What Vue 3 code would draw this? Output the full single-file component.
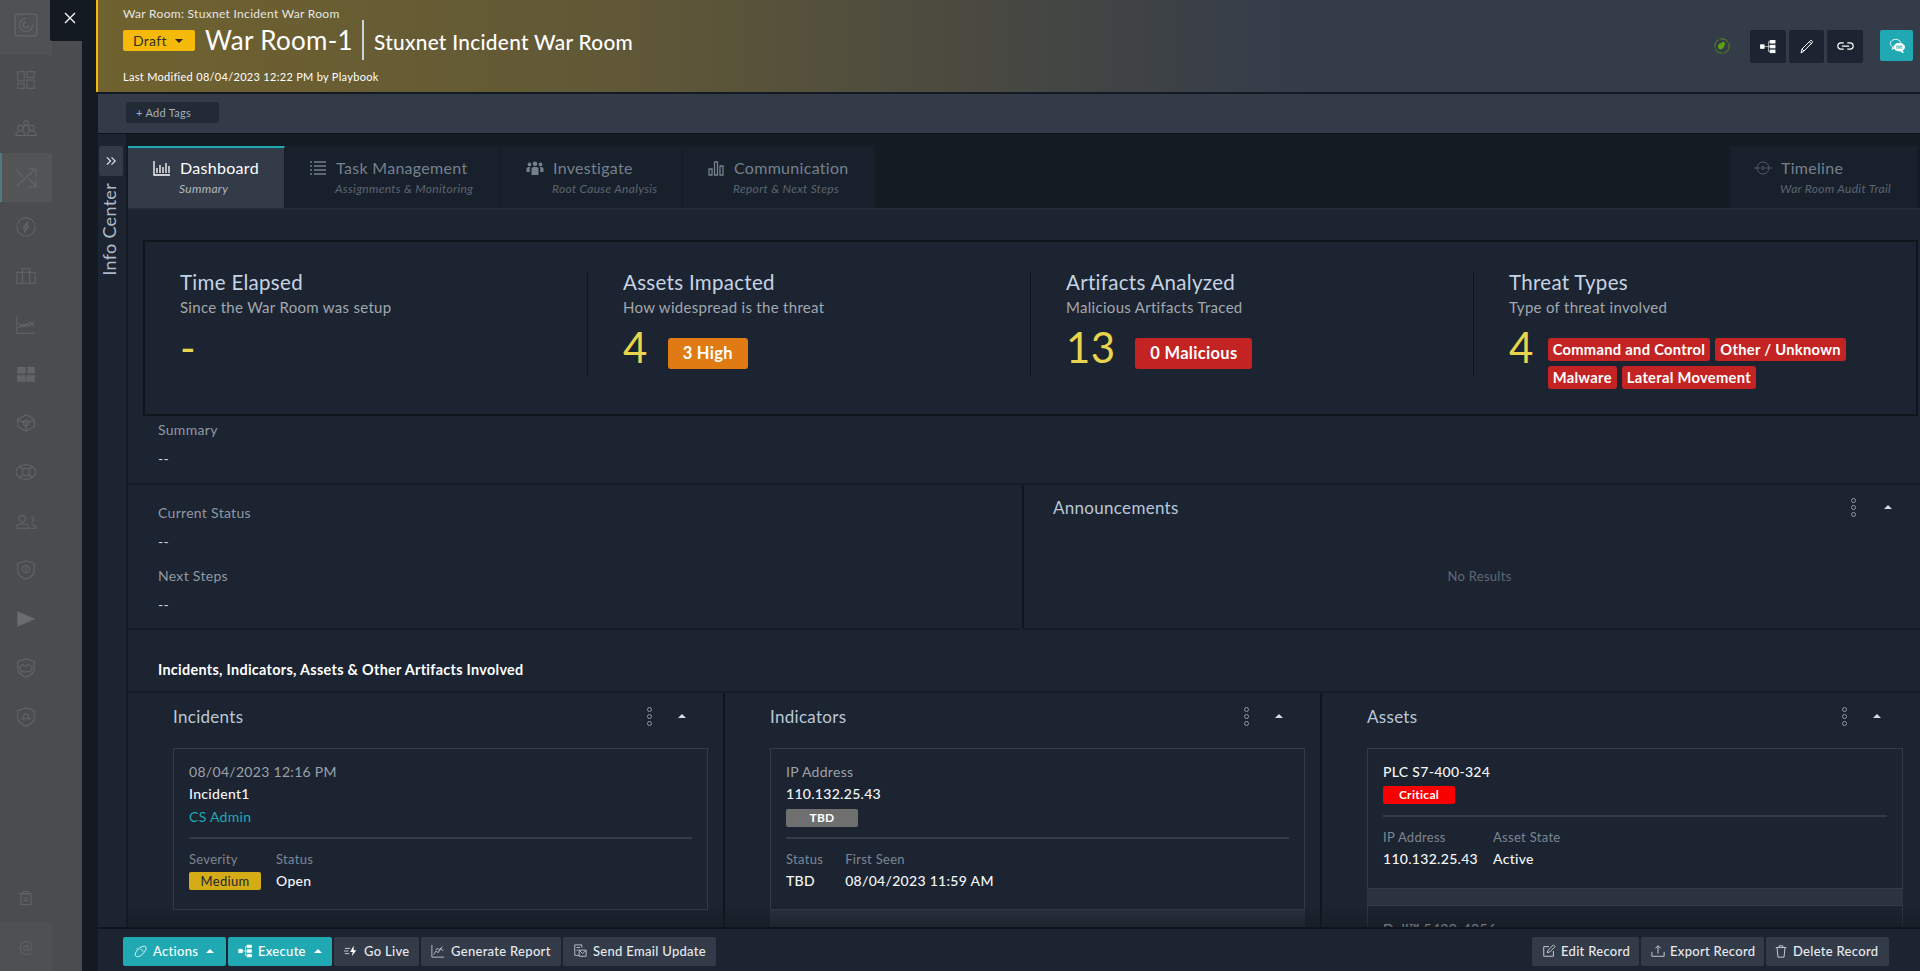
<template>
  <div class="page">
    <aside class="sidebar">
      <div v-for="(item, i) in navIcons" :key="i" class="nav-item" :class="item.cls">
        <svg viewBox="0 0 24 24" :width="item.size || 22" :height="item.size || 22" fill="none" stroke="#656669" stroke-width="1.1">
          <path :d="item.d" />
        </svg>
      </div>
      <div class="nav-spacer"></div>
      <div class="nav-item bottom">
        <svg viewBox="0 0 24 24" width="20" height="20" fill="none" stroke="#656669" stroke-width="1.2">
          <path d="M6 7h12v13H6zM4 7h16M9 7V4h6v3M9 12h5l-1-1M15 15h-5l1 1" />
        </svg>
      </div>
      <div class="nav-item bottom last">
        <span class="at">@</span>
      </div>
    </aside>

    <button class="close-btn">
      <svg viewBox="0 0 12 12" width="12" height="12" stroke="#fff" stroke-width="1.3"><path d="M1 1l10 10M11 1L1 11" /></svg>
    </button>

    <div class="main">
      <header class="head">
        <div class="head-left">
          <div class="crumb">War Room: Stuxnet Incident War Room</div>
          <div class="title-row">
            <span class="draft">Draft <i class="caret-down"></i></span>
            <span class="room-id">War Room-1</span>
            <span class="room-name">Stuxnet Incident War Room</span>
          </div>
          <div class="modified">Last Modified 08/04/2023 12:22 PM by Playbook</div>
        </div>
        <div class="head-actions">
          <svg class="status-icon" viewBox="0 0 16 16" width="16" height="16">
            <circle cx="8" cy="8" r="7.2" fill="none" stroke="#5aa30a" stroke-width="0.8" stroke-dasharray="9 1.5" />
            <path d="M4 8.400c0-2 1.600-3.400 3.400-3.400L9 3.600l.8.8 1-.4.5 1-.8.8.7.9-1 .6c0 2.300-1.500 4-3.500 4-1.600 0-2.700-1.200-2.700-2.900z" fill="#5aa30a" />
          </svg>
          <button class="icon-btn wide">
            <svg viewBox="0 0 18 16" width="18" height="14" fill="#fff" stroke="#fff" stroke-width="1">
              <rect x="0.500" y="5.500" width="4" height="4" />
              <rect x="11.500" y="0.500" width="5.500" height="3" />
              <rect x="11.500" y="6" width="5.500" height="3" />
              <rect x="11.500" y="11.500" width="5.500" height="3" />
              <path d="M4 7.500h7.500M11.500 2h-2v11h2" fill="none" stroke-width="0.700" />
            </svg>
          </button>
          <button class="icon-btn">
            <svg viewBox="0 0 16 16" width="16" height="16" fill="none" stroke="#fff" stroke-width="1">
              <path d="M2 14l1-4L11.500 1.500c.6-.6 2.400 1 1.900 1.800L5 12zM3 10l2 2M10.300 2.700l2.400 2.200" />
            </svg>
          </button>
          <button class="icon-btn wide">
            <svg viewBox="0 0 18 10" width="17" height="9" fill="none" stroke="#fff" stroke-width="1.300">
              <path d="M7 1H4a3.500 3.500 0 000 7h3M11 1h3a3.500 3.500 0 010 7h-3M5 4.500h8" />
            </svg>
          </button>
          <button class="chat-btn">
            <svg viewBox="0 0 18 18" width="16" height="16" fill="none" stroke="#fff" stroke-width="1">
              <path d="M8 11c-.5 0-1.200 0-1.800-.2L3.500 13l.6-3C2.500 9 1.500 7.500 1.500 6c0-2.600 2.900-4.500 5.800-4.500S13 3 13.300 5.400" />
              <path d="M5.500 10.500c0-2.800 2.500-4.500 6-4.500s6 1.800 6 4.300c0 1.500-1 2.900-2.500 3.600l1 2.800-3.300-2.200c-4 .3-7.200-1.500-7.200-4z" fill="#fff" />
              <path d="M8 9.200h7M8 11.200h7" stroke="#20a9b3" />
            </svg>
          </button>
        </div>
      </header>

      <div class="tagbar">
        <span class="add-tags">+ Add Tags</span>
      </div>

      <div class="body">
        <div class="rail">
          <button class="rail-toggle">
            <svg viewBox="0 0 12 10" width="11" height="10" fill="none" stroke="#dfe4ea" stroke-width="1.300"><path d="M1 1l4 4-4 4M6 1l4 4-4 4" /></svg>
          </button>
          <span class="rail-label">Info Center</span>
        </div>

        <div class="content">
          <nav class="tabs">
            <div v-for="tab in tabs" :key="tab.name" class="tab" :class="[tab.cls, { active: tab.active }]">
              <div class="tab-top">
                <svg class="tab-icon" viewBox="0 0 18 16" width="18" height="16" :fill="tab.solid ? 'currentColor' : 'none'" :stroke="tab.solid ? 'none' : 'currentColor'" :stroke-width="tab.thin ? 0.8 : 1.3">
                  <path :d="tab.icon" />
                </svg>
                <span>{{ tab.name }}</span>
              </div>
              <div class="tab-sub">{{ tab.sub }}</div>
            </div>
          </nav>

          <div class="scroll">
            <section class="kpis">
              <div class="kpi">
                <div class="kpi-inner">
                  <h3>Time Elapsed</h3>
                  <p>Since the War Room was setup</p>
                  <div class="kpi-val"><span class="num">-</span></div>
                </div>
              </div>
              <div class="kpi">
                <div class="kpi-inner">
                  <h3>Assets Impacted</h3>
                  <p>How widespread is the threat</p>
                  <div class="kpi-val"><span class="num">4</span><span class="big-badge orange">3 High</span></div>
                </div>
              </div>
              <div class="kpi">
                <div class="kpi-inner">
                  <h3>Artifacts Analyzed</h3>
                  <p>Malicious Artifacts Traced</p>
                  <div class="kpi-val"><span class="num">13</span><span class="big-badge red">0 Malicious</span></div>
                </div>
              </div>
              <div class="kpi">
                <div class="kpi-inner">
                  <h3>Threat Types</h3>
                  <p>Type of threat involved</p>
                  <div class="kpi-val threat">
                    <span class="num">4</span>
                    <div class="threat-tags">
                      <span v-for="t in threats" :key="t" class="threat-tag">{{ t }}</span>
                    </div>
                  </div>
                </div>
              </div>
            </section>

            <section class="summary">
              <div class="lbl">Summary</div>
              <div class="dash">--</div>
            </section>

            <section class="status-row">
              <div class="status-col">
                <div class="lbl">Current Status</div>
                <div class="dash">--</div>
                <div class="lbl next">Next Steps</div>
                <div class="dash">--</div>
              </div>
              <div class="announce">
                <div class="panel-head">
                  <h4>Announcements</h4>
                  <span class="kebab"><i></i><i></i><i></i></span>
                  <i class="caret-up"></i>
                </div>
                <div class="no-results">No Results</div>
              </div>
            </section>

            <h5 class="section-title">Incidents, Indicators, Assets &amp; Other Artifacts Involved</h5>

            <section class="columns">
              <div class="col">
                <div class="panel-head">
                  <h4>Incidents</h4>
                  <span class="kebab"><i></i><i></i><i></i></span>
                  <i class="caret-up"></i>
                </div>
                <div class="card-list plain">
                  <div class="card">
                    <div class="line muted-l">08/04/2023 12:16 PM</div>
                    <div class="line strong">Incident1</div>
                    <div class="line link">CS Admin</div>
                    <hr />
                    <div class="fields">
                      <div>
                        <div class="line field-l">Severity</div>
                        <span class="pill medium">Medium</span>
                      </div>
                      <div>
                        <div class="line field-l">Status</div>
                        <div class="line strong">Open</div>
                      </div>
                    </div>
                  </div>
                </div>
              </div>

              <div class="col">
                <div class="panel-head">
                  <h4>Indicators</h4>
                  <span class="kebab"><i></i><i></i><i></i></span>
                  <i class="caret-up"></i>
                </div>
                <div class="card-list">
                  <div class="card">
                    <div class="line muted-l">IP Address</div>
                    <div class="line strong">110.132.25.43</div>
                    <span class="pill tbd">TBD</span>
                    <hr class="tight" />
                    <div class="fields wide-gap">
                      <div>
                        <div class="line field-l">Status</div>
                        <div class="line strong">TBD</div>
                      </div>
                      <div>
                        <div class="line field-l">First Seen</div>
                        <div class="line strong">08/04/2023 11:59 AM</div>
                      </div>
                    </div>
                  </div>
                </div>
              </div>

              <div class="col">
                <div class="panel-head">
                  <h4>Assets</h4>
                  <span class="kebab"><i></i><i></i><i></i></span>
                  <i class="caret-up"></i>
                </div>
                <div class="card-list">
                  <div class="card short">
                    <div class="line strong">PLC S7-400-324</div>
                    <span class="pill critical">Critical</span>
                    <hr class="tight crit" />
                    <div class="fields">
                      <div>
                        <div class="line field-l">IP Address</div>
                        <div class="line strong">110.132.25.43</div>
                      </div>
                      <div>
                        <div class="line field-l">Asset State</div>
                        <div class="line strong">Active</div>
                      </div>
                    </div>
                  </div>
                  <div class="card">
                    <div class="line strong">Dell™ 5420-4256</div>
                  </div>
                </div>
              </div>
            </section>
          </div>
        </div>
      </div>

      <footer class="foot">
        <div class="foot-group">
          <button class="btn teal w-actions">
            <svg viewBox="0 0 16 16" width="15" height="15" fill="none" stroke="#e8f6f7" stroke-width="1"><path d="M3 13c-1.500-1.500 0-5 2.500-7.500S12 1.500 13.500 3 13 8 10.500 10.500 4.500 14.500 3 13zM8 5l3 3M4 4.500l1 1" /></svg>
            Actions <i class="caret-up white"></i>
          </button>
          <button class="btn teal w-exec">
            <svg viewBox="0 0 18 16" width="15" height="14" fill="#fff" stroke="#fff" stroke-width="1"><rect x="1" y="6" width="4" height="4" /><rect x="11" y="1" width="5" height="3" /><rect x="11" y="6.500" width="5" height="3" /><rect x="11" y="12" width="5" height="3" /><path d="M5 8h6M11 2.500H9v11h2" fill="none" stroke-width="0.700" /></svg>
            Execute <i class="caret-up white"></i>
          </button>
          <button class="btn w-live">
            <svg viewBox="0 0 16 16" width="14" height="14" fill="none" stroke="#d8dde3" stroke-width="1"><path d="M1 5h6M0 8h5M1 11h5" /><path d="M11 2L7 9h3l-1 5 5-7h-3z" fill="#fff" stroke="none" /></svg>
            Go Live
          </button>
          <button class="btn w-report">
            <svg viewBox="0 0 16 16" width="14" height="14" fill="none" stroke="#c6ccd4" stroke-width="1"><path d="M1 1v14h14M3 12l3-4 2 2 3-5 3 3M5 7l3-2 2 2 3-4" /></svg>
            Generate Report
          </button>
          <button class="btn w-mail">
            <svg viewBox="0 0 16 16" width="14" height="14" fill="none" stroke="#c6ccd4" stroke-width="1"><path d="M2 1h8v3M2 1v12h5M4 4h4M4 7h2" /><path d="M7 7h8v7H7zM7 7l4 4 4-4" /></svg>
            Send Email Update
          </button>
        </div>
        <div class="foot-group right">
          <button class="btn w-edit">
            <svg viewBox="0 0 16 16" width="14" height="14" fill="none" stroke="#c6ccd4" stroke-width="1.100"><path d="M8 3H2v11h11V8M6 10l1-3 6-6 2 2-6 6z" /></svg>
            Edit Record
          </button>
          <button class="btn w-export">
            <svg viewBox="0 0 16 16" width="14" height="14" fill="none" stroke="#c6ccd4" stroke-width="1.100"><path d="M8 11V2M5 5l3-3 3 3M1 9v5h14V9" /></svg>
            Export Record
          </button>
          <button class="btn w-delete">
            <svg viewBox="0 0 16 16" width="14" height="14" fill="none" stroke="#c6ccd4" stroke-width="1.100"><path d="M2 4h12M6 4V2h4v2M3.500 4l1 11h7l1-11" /></svg>
            Delete Record
          </button>
        </div>
      </footer>
    </div>
  </div>
</template>

<script setup>
const navIcons = [
  { cls: 'logo', size: 26, d: 'M5 2h14a3 3 0 013 3v14a3 3 0 01-3 3H5a3 3 0 01-3-3V5a3 3 0 013-3zM12 6a6 6 0 106 6M12 9.500a2.500 2.500 0 102.500 2.500' },
  { d: 'M3 3h7v10H3zM13 3h8v6h-8zM3 16h7v5H3zM13 12h8v9h-8z' },
  { d: 'M1 19c0-3 2-5 5-5s5 2 5 5zM13 19c0-3 2-5 5-5s5 2 5 5zM6 14a3 3 0 110-6 3 3 0 010 6zM18 14a3 3 0 110-6 3 3 0 010 6zM9 13c0-3 1-5 3-5s3 2 3 5M12 8a2.500 2.500 0 110-5 2.500 2.500 0 010 5z' },
  { cls: 'active', size: 24, d: 'M2 20L20 3M14 3h7v7M2 5l6 6M14 13l7 7M21 14v7h-7' },
  { d: 'M12 2a10 10 0 100 20 10 10 0 000-20zM14 6l-5 7h3l-2 5 5-7h-3z' },
  { d: 'M2 8h20v12H2zM8 8V4h8v4M8 8v12M16 8v12' },
  { d: 'M2 3v18h20M4 15l5-4 3 3 4-5 5 4M4 10l5 4 3-3 4 2 5-5' },
  { cls: 'blocks', d: 'M3 5h8v6H3zM14 5h7v6h-7zM3 14h8v6H3zM13 14h8v6h-8z' },
  { d: 'M12 3l9 5v8l-9 5-9-5V8zM3 9l9 3 9-3M12 12v9M12 9a3 3 0 100 6 3 3 0 000-6z' },
  { d: 'M12 4c6 0 11 4 11 8s-5 8-11 8S1 16 1 12s5-8 11-8zM12 8a4 4 0 100 8 4 4 0 000-8zM5 6l4 3M19 6l-4 3M5 18l4-3M19 18l-4-3' },
  { d: 'M1 20c0-3 3-5 7-5s7 2 7 5zM8 13a3.500 3.500 0 110-7 3.500 3.500 0 010 7zM17 20h6c0-3-2-4-5-4M18 13a2.500 2.500 0 100-5' },
  { d: 'M12 2l9 3v8c0 4-4 7-9 9-5-2-9-5-9-9V5zM12 7a4 4 0 100 8 4 4 0 000-8zM12 8v6' },
  { cls: 'play', d: 'M3 4l18 8-18 8z' },
  { d: 'M12 2l9 3v8c0 4-4 7-9 9-5-2-9-5-9-9V5zM5 11l4-3 3 2 3-2 4 3-2 5H7z' },
  { d: 'M12 2l9 3v8c0 4-4 7-9 9-5-2-9-5-9-9V5zM7 14h10M9 14l1-5h4l1 5' }
]

const tabs = [
  { name: 'Dashboard', sub: 'Summary', active: true, cls: 't-dash', icon: 'M1 1v14h16M4 13V8M7 13V5M10 13V7M13 13V3M16 13V6' },
  { name: 'Task Management', sub: 'Assignments & Monitoring', cls: 't-task', icon: 'M1 2h2M5 2h12M1 6h2M5 6h12M1 10h2M5 10h12M1 14h2M5 14h12' },
  { name: 'Investigate', sub: 'Root Cause Analysis', cls: 't-inv', solid: true, icon: 'M9 1.500a2.300 2.300 0 110 4.600 2.300 2.300 0 010-4.600zM3.500 2.500a1.900 1.900 0 110 3.800 1.900 1.900 0 010-3.800zM14.500 2.500a1.900 1.900 0 110 3.800 1.900 1.900 0 010-3.800zM5.500 15V9c0-1.500 1.500-2.300 3.500-2.300s3.500.8 3.500 2.300v6zM.5 12V8.500c0-1 1.200-1.500 3.800-1.500-.4.500-.6 1.200-.6 2v3zM17.500 12V8.500c0-1-1.200-1.500-3.800-1.500.4.500.6 1.200.6 2v3z' },
  { name: 'Communication', sub: 'Report & Next Steps', cls: 't-comm', icon: 'M2 15V9h3v6zM7.500 15V2h3v13zM13 15V6h3v9z' },
  { name: 'Timeline', sub: 'War Room Audit Trail', cls: 't-time', thin: true, icon: 'M3 8a6 6 0 0112 0A6 6 0 013 8zM0 8h6M12 8h6M7.500 8a1.500 1.500 0 103 0 1.500 1.500 0 00-3 0z' }
]

const threats = ['Command and Control', 'Other / Unknown', 'Malware', 'Lateral Movement']
</script>

<style>
html,
body {
  margin: 0;
  background: #131a22;
}
</style>

<style scoped>
.page {
  position: relative;
  display: flex;
  height: 971px;
  width: 1920px;
  overflow: hidden;
  background: #131a22;
  font-family: Lato, "Open Sans", sans-serif;
  font-size: 14px;
  color: #fff;
  letter-spacing: 0.3px;
}

button {
  font-family: inherit;
  letter-spacing: inherit;
  border: none;
  cursor: pointer;
}

h3, h4, h5, p {
  margin: 0;
  font-weight: 400;
}

/* sidebar, dimmed behind the panel */
.sidebar {
  width: 82px;
  flex: none;
  display: flex;
  flex-direction: column;
  background: #4b4c4f;
}

.nav-item {
  width: 52px;
  height: 49px;
  display: flex;
  align-items: center;
  justify-content: center;
  box-sizing: border-box;
}

.nav-item.logo {
  height: 55px;
  padding-bottom: 6px;
  background: #505153;
}

.nav-item.active {
  background: #535456;
  border-left: 2px solid #4f7a80;
}

.nav-item.play svg {
  fill: #6c6d70;
}

.nav-item.blocks svg {
  fill: #626366;
}

.nav-spacer {
  flex: 1;
}

.nav-item.bottom.last {
  background: #4f5053;
  height: 49px;
}

.at {
  color: #5f6063;
  font-size: 17px;
}

.close-btn {
  position: absolute;
  left: 50px;
  top: 0;
  width: 32px;
  height: 41px;
  background: #131a22;
  border-bottom-left-radius: 2px;
  display: flex;
  align-items: center;
  justify-content: center;
  padding: 0 0 5px 8px;
}

.main {
  margin-left: 14px;
  flex: 1;
  min-width: 0;
  display: flex;
  flex-direction: column;
}

/* header */
.head {
  height: 92px;
  box-sizing: border-box;
  border-left: 2px solid #f5b90a;
  background: linear-gradient(90deg, #70622f 0%, #5f5737 30%, #343c4a 66%);
  display: flex;
  justify-content: space-between;
  padding-left: 25px;
  flex: none;
}

.crumb {
  margin-top: 6px;
  font-size: 12px;
  line-height: 16px;
  color: #e6e6e3;
}

.title-row {
  display: flex;
  align-items: center;
  height: 40px;
  margin-top: -2px;
}

.draft {
  width: 72px;
  height: 21px;
  box-sizing: border-box;
  background: #f5b90a;
  border-radius: 2px;
  color: #33302a;
  font-size: 14px;
  line-height: 21px;
  padding-left: 10px;
  margin-right: 10px;
  position: relative;
}

.caret-down {
  position: absolute;
  right: 12px;
  top: 9px;
  border: 4px solid transparent;
  border-top-color: #222;
  border-bottom: 0;
}

.room-id {
  font-size: 26px;
  line-height: 40px;
  padding-right: 9px;
  border-right: 2px solid #c8d3dd;
  margin-right: 10px;
}

.room-name {
  font-size: 20.8px;
  font-weight: 500;
  margin-top: 2px;
}

.modified {
  font-size: 11px;
  line-height: 14px;
  margin-top: 10px;
}

.head-actions {
  display: flex;
  align-items: flex-start;
  padding-top: 30px;
  padding-right: 7px;
}

.status-icon {
  margin: 8px 20px 0 0;
}

.icon-btn {
  width: 35px;
  height: 33px;
  margin-right: 3px;
  background: #1c2431;
  border-radius: 2px;
  display: flex;
  align-items: center;
  justify-content: center;
  padding: 0;
}

.icon-btn.wide {
  width: 36px;
}

.chat-btn {
  width: 33px;
  height: 31px;
  margin-left: 14px;
  background: #20a9b3;
  border-radius: 2px;
  display: flex;
  align-items: center;
  justify-content: center;
  padding: 0;
}

/* tag row */
.tagbar {
  margin-top: 2px;
  height: 40px;
  margin-left: 2px;
  box-sizing: border-box;
  background: #333b49;
  border-bottom: 1px solid #0f141a;
  padding: 8px 0 0 28px;
  flex: none;
}

.add-tags {
  display: block;
  width: 93px;
  height: 21px;
  box-sizing: border-box;
  background: #222a36;
  border-radius: 2px;
  color: #a9b0ba;
  font-size: 11px;
  line-height: 21px;
  padding-left: 10px;
}

.body {
  flex: 1;
  min-height: 0;
  display: flex;
  margin-left: 2px;
}

.rail {
  width: 28px;
  flex: none;
  background: #1c2431;
  margin-right: 2px;
  padding-top: 12px;
  box-sizing: content-box;
  display: flex;
  flex-direction: column;
  align-items: flex-start;
}

.rail-toggle {
  width: 24px;
  height: 30px;
  margin-left: 1px;
  background: #333b49;
  border-radius: 2px;
  display: flex;
  align-items: center;
  justify-content: center;
  padding: 0;
}

.rail-label {
  writing-mode: vertical-rl;
  transform: rotate(180deg);
  font-size: 18px;
  color: #aeb9c6;
  margin: 7px 0 0 -1px;
  line-height: 24px;
}

.content {
  flex: 1;
  min-width: 0;
  display: flex;
  flex-direction: column;
}

/* tabs */
.tabs {
  flex: none;
  height: 76px;
  box-sizing: border-box;
  padding-top: 12px;
  display: flex;
  background: #141b23;
  border-bottom: 2px solid #222a36;
}

.tab {
  height: 62px;
  box-sizing: border-box;
  background: #18202b;
  border-top: 2px solid transparent;
  border-right: 1px solid #141b23;
  padding-top: 9px;
  color: #75808e;
}

.tab.active {
  background: #333b49;
  border-top-color: #20a9b3;
  color: #fff;
}

.t-dash { width: 157px; padding-left: 25px; }
.t-task { width: 215px; padding-left: 24px; }
.t-inv { width: 183px; padding-left: 26px; }
.t-comm { width: 192px; padding-left: 24px; }
.t-time { width: 187px; margin-left: auto; margin-right: 3px; padding-left: 24px; border-right: 0; }

.tab-top {
  display: flex;
  align-items: center;
  font-size: 16px;
  line-height: 22px;
}

.tab-icon {
  margin-right: 9px;
}

.t-dash .tab-icon {
  margin-right: 9px;
}

.tab-sub {
  font-size: 12px;
  font-style: italic;
  line-height: 18px;
  color: #5c6572;
  margin-top: 1px;
  padding-left: 26px;
}

.t-dash .tab-sub {
  color: #b0b6be;
}

.t-time .tab-icon {
  color: #5c6572;
}

.scroll {
  position: relative;
  flex: 1;
  min-height: 0;
  overflow: hidden;
  background: #1c2431;
  padding-top: 30px;
}

.scroll::after {
  content: '';
  position: absolute;
  left: 0;
  right: 0;
  bottom: 0;
  height: 22px;
  background: linear-gradient(rgba(20, 27, 35, 0), rgba(20, 27, 35, 0.65));
}

/* kpi tiles */
.kpis {
  margin: 0 2px 0 15px;
  height: 176px;
  box-sizing: border-box;
  border: 2px solid #10151b;
  display: grid;
  grid-template-columns: 442px 443px 443px 443px;
  padding-top: 30px;
  background: #1c2431;
}

.kpi {
  height: 105px;
}

.kpi + .kpi {
  border-left: 1px solid #10151b;
}

.kpi-inner {
  padding-left: 35px;
}

.kpi h3 {
  font-size: 20.5px;
  line-height: 24px;
  margin-top: -2px;
  color: #c5d3e3;
}

.kpi p {
  font-size: 15px;
  line-height: 20px;
  margin-top: 3px;
  color: #a1a7ae;
}

.kpi-val {
  display: flex;
  align-items: flex-start;
  margin-top: 5px;
}

.num {
  font-size: 42px;
  line-height: 50px;
  color: #e8d44d;
  margin-right: 20px;
}

.threat .num {
  margin-right: 14px;
}

.big-badge {
  margin-top: 16px;
  height: 31px;
  box-sizing: border-box;
  padding: 0 15px;
  border-radius: 3px;
  font-size: 16.5px;
  font-weight: 700;
  line-height: 31px;
}

.orange { background: #e07b13; }
.red { background: #c42323; }

.threat-tags {
  display: flex;
  flex-wrap: wrap;
  gap: 5px;
  margin-top: 16px;
  width: 330px;
}

.threat-tag {
  height: 23px;
  box-sizing: border-box;
  background: #c42323;
  border-radius: 3px;
  padding: 0 5px;
  font-size: 14.7px;
  font-weight: 700;
  line-height: 23px;
}

/* summary and status */
.lbl {
  font-size: 14px;
  line-height: 20px;
  color: #9098a3;
}

.dash {
  font-size: 14px;
  line-height: 20px;
  margin-top: 9px;
  color: #cfd4da;
}

.summary {
  height: 69px;
  box-sizing: border-box;
  padding: 4px 0 0 30px;
  border-bottom: 2px solid #161d26;
}

.status-row {
  display: flex;
  height: 145px;
  box-sizing: border-box;
  border-bottom: 2px solid #161d26;
}

.status-col {
  width: 896px;
  box-sizing: border-box;
  padding: 18px 0 0 30px;
  border-right: 2px solid #10151b;
}

.lbl.next {
  margin-top: 14px;
}

.announce {
  flex: 1;
  padding: 0 0 0 29px;
  position: relative;
}

.panel-head {
  display: flex;
  align-items: center;
  height: 44px;
}

.panel-head h4 {
  flex: 1;
  font-size: 17px;
  color: #b9c8d9;
}

.kebab {
  display: flex;
  flex-direction: column;
  gap: 2px;
  margin-right: 28px;
}

.kebab i {
  display: block;
  width: 3px;
  height: 3px;
  border: 1px solid #8d97a3;
  border-radius: 50%;
}

.caret-up {
  display: inline-block;
  border: 4px solid transparent;
  border-bottom: 4px solid #d5dde6;
  border-top: 0;
}

.announce .panel-head {
  padding-right: 28px;
}

.no-results {
  text-align: center;
  margin-top: 39px;
  font-size: 13px;
  color: #5e6875;
  padding-right: 14px;
}

.section-title {
  font-size: 14.4px;
  font-weight: 700;
  line-height: 20px;
  padding: 30px 0 0 30px;
  height: 63px;
  box-sizing: border-box;
  border-bottom: 2px solid #161d26;
}

/* record columns */
.columns {
  display: grid;
  grid-template-columns: 597px 597px 1fr;
}

.col {
  border-right: 2px solid #10151b;
  padding: 0 15px 0 45px;
  height: 240px;
}

.col:last-child {
  border-right: 0;
  padding-right: 17px;
}

.col .panel-head {
  height: 46px;
  margin-bottom: 9px;
  padding-right: 22px;
}

.col .kebab {
  margin-right: 26px;
}

.card-list {
  background: #2b3340;
  height: 190px;
}

.card-list.plain {
  background: none;
}

.card {
  background: #1c2431;
  height: 162px;
  box-sizing: border-box;
  border: 1px solid #333b49;
  padding: 12px 15px 0;
}

.card.short {
  height: 141px;
  margin-bottom: 16px;
}

.line {
  font-size: 14px;
  line-height: 22px;
}

.muted-l {
  color: #9ba1a9;
}

.strong {
  color: #f4f6f8;
  font-weight: 500;
}

.link {
  color: #20a9b3;
  margin-top: 1px;
}

.field-l {
  font-size: 13px;
  color: #7d8693;
}

hr {
  border: 0;
  height: 2px;
  background: #333b49;
  margin: 9px 0 9px;
}

hr.tight {
  margin: 10px 0 9px;
}

hr.tight.crit {
  margin-top: 11px;
}

.fields {
  display: flex;
  gap: 15px;
}

.fields.wide-gap {
  gap: 22px;
}

.pill {
  display: block;
  width: 72px;
  height: 18px;
  border-radius: 2px;
  font-size: 13px;
  line-height: 18px;
  text-align: center;
  box-sizing: border-box;
}

.medium {
  background: #d4ac16;
  color: #1c2431;
  margin-top: 2px;
}

.tbd {
  background: #6f6f6f;
  font-size: 12px;
  font-weight: 700;
  margin-top: 4px;
}

.critical {
  background: #f90000;
  font-size: 12px;
  font-weight: 700;
  margin-top: 3px;
}

/* bottom actions */
.foot {
  flex: none;
  height: 44px;
  box-sizing: border-box;
  border-top: 2px solid #10151b;
  margin-left: 2px;
  background: #1c2431;
  padding: 8px 31px 0 25px;
  display: flex;
  justify-content: space-between;
}

.foot-group {
  display: flex;
  gap: 2px;
}

.btn {
  height: 29px;
  box-sizing: border-box;
  background: #333b49;
  color: #e6eaee;
  border-radius: 2px;
  font-size: 13px;
  font-weight: 500;
  padding: 0 0 1px 10px;
  display: flex;
  align-items: center;
  gap: 6px;
  white-space: nowrap;
}

.btn.teal {
  background: #20a9b3;
  color: #fff;
  gap: 5px;
}

.foot-group.right .btn {
  gap: 5px;
}

.caret-up.white {
  border-bottom-color: #fff;
  margin-left: 3px;
}

.w-actions { width: 103px; }
.w-exec { width: 104px; }
.w-live { width: 85px; }
.w-report { width: 140px; }
.w-mail { width: 153px; }
.w-edit { width: 107px; }
.w-export { width: 123px; }
.w-delete { width: 123px; padding-left: 8px; }
</style>
